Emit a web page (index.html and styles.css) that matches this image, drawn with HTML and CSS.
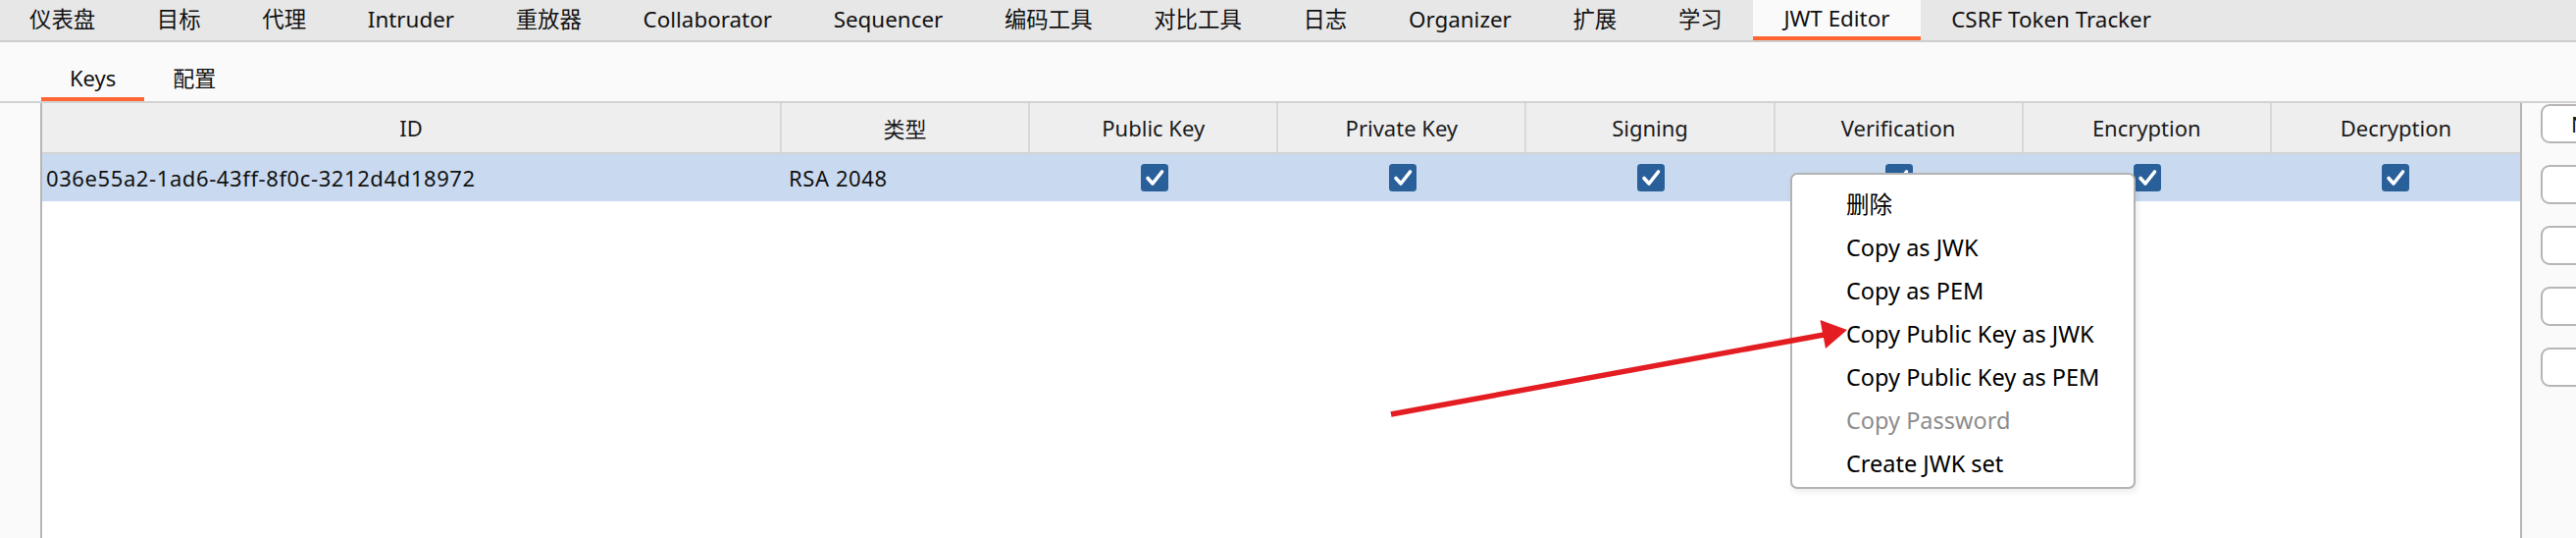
FILE: index.html
```html
<!DOCTYPE html>
<html lang="zh">
<head>
<meta charset="utf-8">
<title>JWT Editor</title>
<link rel="stylesheet" href="styles.css">
</head>
<body>
<div class="page">
  <nav class="topbar">
    <div class="tab">仪表盘</div>
    <div class="tab">目标</div>
    <div class="tab">代理</div>
    <div class="tab">Intruder</div>
    <div class="tab">重放器</div>
    <div class="tab">Collaborator</div>
    <div class="tab">Sequencer</div>
    <div class="tab">编码工具</div>
    <div class="tab">对比工具</div>
    <div class="tab">日志</div>
    <div class="tab">Organizer</div>
    <div class="tab">扩展</div>
    <div class="tab">学习</div>
    <div class="tab active">JWT Editor</div>
    <div class="tab">CSRF Token Tracker</div>
  </nav>

  <div class="subtabs">
    <div class="subtab active">Keys</div>
    <div class="subtab">配置</div>
  </div>

  <div class="main">
    <div class="table">
      <div class="thead">
        <div class="th">ID</div>
        <div class="th">类型</div>
        <div class="th">Public Key</div>
        <div class="th">Private Key</div>
        <div class="th">Signing</div>
        <div class="th">Verification</div>
        <div class="th">Encryption</div>
        <div class="th last">Decryption</div>
      </div>
      <div class="trow selected">
        <div class="td text">036e55a2-1ad6-43ff-8f0c-3212d4d18972</div>
        <div class="td text">RSA 2048</div>
        <div class="td"><svg class="cb" viewBox="0 0 28 28"><rect width="28" height="28" rx="3.5"/><path d="M7 14.5 L12 20 L21.5 8"/></svg></div>
        <div class="td"><svg class="cb" viewBox="0 0 28 28"><rect width="28" height="28" rx="3.5"/><path d="M7 14.5 L12 20 L21.5 8"/></svg></div>
        <div class="td"><svg class="cb" viewBox="0 0 28 28"><rect width="28" height="28" rx="3.5"/><path d="M7 14.5 L12 20 L21.5 8"/></svg></div>
        <div class="td"><svg class="cb" viewBox="0 0 28 28"><rect width="28" height="28" rx="3.5"/><path d="M7 14.5 L12 20 L21.5 8"/></svg></div>
        <div class="td"><svg class="cb" viewBox="0 0 28 28"><rect width="28" height="28" rx="3.5"/><path d="M7 14.5 L12 20 L21.5 8"/></svg></div>
        <div class="td"><svg class="cb" viewBox="0 0 28 28"><rect width="28" height="28" rx="3.5"/><path d="M7 14.5 L12 20 L21.5 8"/></svg></div>
      </div>
      <div class="tbody-fill"></div>
    </div>

    <div class="side">
      <button class="btn">N</button>
      <button class="btn"></button>
      <button class="btn"></button>
      <button class="btn"></button>
      <button class="btn"></button>
    </div>
  </div>

  <div class="menu">
    <div class="mi">删除</div>
    <div class="mi">Copy as JWK</div>
    <div class="mi">Copy as PEM</div>
    <div class="mi">Copy Public Key as JWK</div>
    <div class="mi">Copy Public Key as PEM</div>
    <div class="mi disabled">Copy Password</div>
    <div class="mi">Create JWK set</div>
  </div>

  <svg class="arrow" viewBox="0 0 2626 548" width="2626" height="548">
    <line x1="1418" y1="422" x2="1862" y2="340.5"/>
    <polygon points="1883,336 1855.5,326 1861,355"/>
  </svg>
</div>
</body>
</html>
```

FILE: styles.css
```css
* { box-sizing: border-box; }

html, body {
  margin: 0;
  padding: 0;
  width: 2626px;
  height: 548px;
  overflow: hidden;
  background: #fafafa;
}

body {
  font-family: "Noto Sans", "Noto Sans CJK SC", sans-serif;
  font-size: 22px;
  color: #111;
}

.page {
  position: relative;
  width: 2626px;
  height: 548px;
  display: flex;
  flex-direction: column;
}

/* top tab bar */
.topbar {
  display: flex;
  height: 43px;
  flex: none;
  background: #e7e7e7;
  border-bottom: 2px solid #cdcdcd;
  margin-left: -1px;
  font-size: 22.4px;
}

.tab {
  padding: 0 31.7px 0 31px;
  height: 41px;
  line-height: 39px;
  white-space: nowrap;
  color: #111;
}

.tab.active {
  background: #fafafa;
  border-bottom: 4px solid #ff6633;
  line-height: 37px;
}

/* sub tabs */
.subtabs {
  display: flex;
  flex: none;
  height: 62px;
  padding-left: 42px;
  align-items: flex-end;
  border-bottom: 2px solid #d3d3d3;
}

.subtab {
  height: 42px;
  line-height: 36px;
  padding: 0 29px;
  border-bottom: 4px solid transparent;
}

.subtab.active {
  border-bottom-color: #ff6633;
}

/* main area */
.main {
  flex: 1;
  display: flex;
  padding-left: 41px;
  min-height: 0;
}

.table {
  width: 2530px;
  flex: none;
  display: flex;
  flex-direction: column;
  border-left: 2px solid #b9b5b5;
  border-right: 2px solid #b9b5b5;
  background: #ffffff;
}

.thead {
  display: grid;
  grid-template-columns: 754px repeat(7, 1fr);
  height: 52px;
  background: #eeeeee;
  border-bottom: 2px solid #d3d3d3;
}

.th {
  display: flex;
  align-items: center;
  justify-content: center;
  border-right: 2px solid #d8d8d8;
  color: #1a1a1a;
  white-space: nowrap;
}

.th.last { border-right: none; }

.trow {
  display: grid;
  grid-template-columns: 754px repeat(7, 1fr);
  height: 48px;
}

.trow.selected { background: #c9daf0; }

.td {
  display: flex;
  align-items: center;
  justify-content: center;
}

.td.text {
  justify-content: flex-start;
  padding-left: 4px;
  white-space: nowrap;
  letter-spacing: 0.6px;
}

.td:nth-child(2) { padding-left: 7px; }

.cb {
  width: 28px;
  height: 28px;
  display: block;
}

.cb rect { fill: #2a6099; }

.cb path {
  fill: none;
  stroke: #ffffff;
  stroke-width: 3.6;
  stroke-linecap: round;
  stroke-linejoin: round;
}

.tbody-fill { flex: 1; }

/* right buttons */
.side {
  display: flex;
  flex-direction: column;
  gap: 22px;
  padding: 1px 0 0 19px;
}

.btn {
  width: 220px;
  height: 40px;
  border: 2px solid #b9b5b5;
  border-radius: 9px;
  background: #ffffff;
  font: inherit;
  text-align: left;
  padding: 0 0 0 29px;
  color: #111;
  white-space: nowrap;
  overflow: hidden;
}

/* context menu overlay */
.menu {
  position: absolute;
  left: 1825px;
  top: 176px;
  width: 352px;
  height: 322px;
  background: #ffffff;
  border: 2px solid #b3b3b3;
  border-radius: 7px;
  box-shadow: 2px 3px 6px rgba(0, 0, 0, 0.08);
  padding-top: 8px;
  font-size: 23.5px;
}

.mi {
  height: 44px;
  line-height: 44px;
  padding-left: 55px;
  color: #000;
  white-space: nowrap;
}

.mi.disabled { color: #8c8c8c; }

/* annotation arrow */
.arrow {
  position: absolute;
  left: 0;
  top: 0;
  pointer-events: none;
}

.arrow line {
  stroke: #e31d22;
  stroke-width: 5.5;
}

.arrow polygon { fill: #e31d22; }
```
